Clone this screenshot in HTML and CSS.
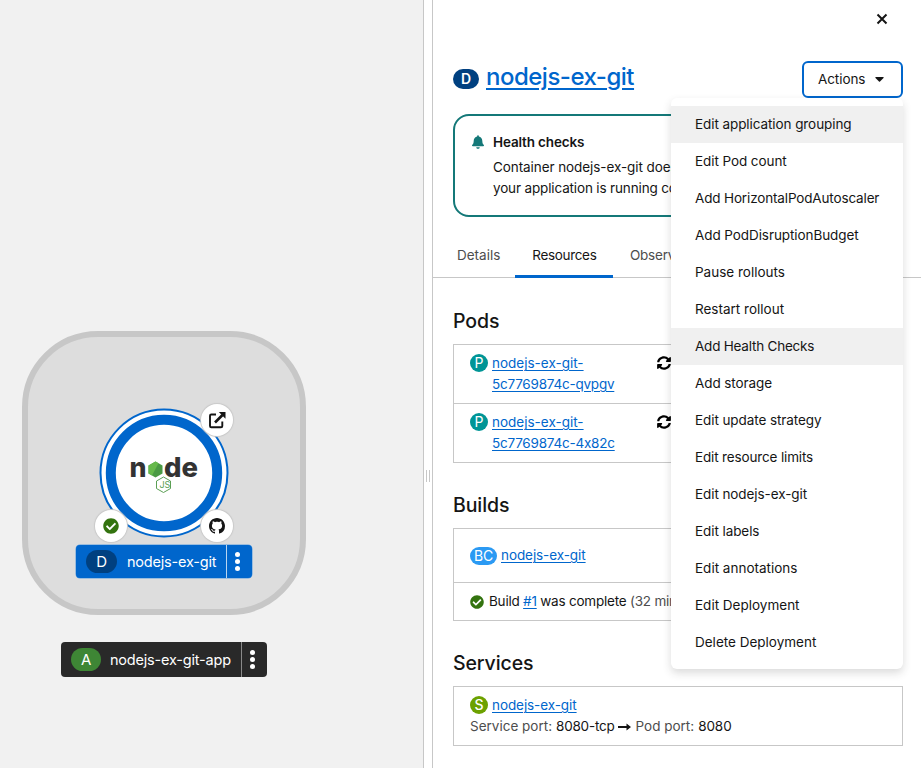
FILE: index.html
```
<!DOCTYPE html>
<html lang="en">
<head>
<meta charset="utf-8">
<title>Topology</title>
<link rel="stylesheet" href="styles.css">
</head>
<body>
<svg class="defs" aria-hidden="true">
  <symbol id="check" viewBox="0 0 512 512"><path d="M504 256c0 137-111 248-248 248S8 393 8 256 119 8 256 8s248 111 248 248zM227 387l184-184c6-6 6-16 0-23l-22-22c-7-7-17-7-23 0L216 308l-70-70c-6-7-16-7-23 0l-22 22c-6 7-6 17 0 23l104 104c6 6 16 6 22 0z"/></symbol>
  <symbol id="sync" viewBox="0 0 512 512"><path d="M371 134c-33-30-75-47-119-47-78 0-146 54-165 128-1 5-6 9-12 9H18c-7 0-13-7-12-14C28 93 132 8 256 8c68 0 130 27 175 71l36-36c15-15 41-4 41 17v134c0 13-11 24-24 24H350c-21 0-32-26-17-41zM32 296h134c21 0 32 26 17 41l-41 41c32 30 74 47 118 47 77 0 145-53 164-128 2-5 6-9 12-9h58c7 0 13 7 11 14-21 117-126 202-249 202-68 0-130-27-175-71l-36 36c-15 15-41 4-41-17V320c0-13 11-24 28-24z"/></symbol>
</svg>
<div class="app">
  <main class="canvas">
    <div class="group"></div>
    <div class="node">
      <svg width="130" height="130" viewBox="0 0 130 130">
        <circle cx="65" cy="65" r="63.5" fill="#fff" stroke="#06c" stroke-width="2"/>
        <circle cx="65" cy="65" r="53.2" fill="#fff" stroke="#06c" stroke-width="10"/>
        <g class="wordmark">
          <text x="30.500" y="68.500" textLength="17" lengthAdjust="spacingAndGlyphs">n</text>
          <text x="65" y="68.500" textLength="34" lengthAdjust="spacingAndGlyphs">de</text>
        </g>
        <path d="M56.500 53.500l7 4v8l-7 4-7-4v-8z" fill="#4a9a43"/>
        <path d="M49.500 57.500l7-4 3 1.700-6.500 12.300-3.500-2z" fill="#66b94b"/>
        <path d="M64.500 69l7 4v7.500l-7 4-7-4V73z" fill="#fff" stroke="#5b9f54"/>
        <text class="js" x="60.500" y="80">JS</text>
      </svg>
    </div>
    <div class="dot dot-open"><svg width="18" height="18" viewBox="0 0 18 18"><path d="M8 3.500H3.300Q2 3.500 2 4.800V15q0 1.300 1.300 1.300H13q1.300 0 1.300-1.300V10.500" fill="none" stroke="#151515" stroke-width="1.900"/><path d="M7 11.500L14.500 4" stroke="#151515" stroke-width="2.600"/><path d="M10.800 1H17.500v6.700z" fill="#151515"/></svg></div>
    <div class="dot dot-ok"><svg width="16" height="16" fill="#33730f"><use href="#check"/></svg></div>
    <div class="dot dot-git"><svg width="16" height="16" viewBox="0 0 16 16"><path fill="#151515" d="M8 0C3.580 0 0 3.580 0 8c0 3.540 2.290 6.530 5.470 7.590.4.070.55-.17.55-.38 0-.19-.010-.82-.010-1.490-2.010.37-2.530-.49-2.690-.94-.09-.23-.48-.94-.82-1.130-.28-.15-.68-.52-.010-.53.63-.010 1.080.58 1.230.82.72 1.210 1.870.87 2.330.66.070-.52.28-.87.51-1.070-1.780-.2-3.640-.89-3.640-3.950 0-.87.31-1.590.82-2.150-.08-.2-.36-1.020.08-2.120 0 0 .67-.21 2.200.82.64-.18 1.320-.27 2-.27s1.360.09 2 .27c1.530-1.040 2.200-.82 2.200-.82.44 1.100.16 1.920.08 2.120.51.56.82 1.270.82 2.150 0 3.070-1.870 3.750-3.650 3.950.29.25.54.73.54 1.480 0 1.070-.010 1.930-.010 2.200 0 .21.15.46.55.38A8.010 8.010 0 0 0 16 8c0-4.420-3.580-8-8-8z"/></svg></div>
    <div class="tag tag-blue"><span class="pill">D</span><span class="tag-name">nodejs-ex-git</span><span class="kebab"><i></i><i></i><i></i></span></div>
    <div class="tag tag-dark"><span class="pill">A</span><span class="tag-name">nodejs-ex-git-app</span><span class="kebab"><i></i><i></i><i></i></span></div>
  </main>
  <div class="splitter"><span class="grip"></span></div>
  <aside class="panel">
    <div class="close-row"><svg width="12" height="12" viewBox="0 0 12 12"><path d="M1.500 1.500l9 9M10.500 1.500l-9 9" stroke="#151515" stroke-width="2"/></svg></div>
    <header class="head">
      <span class="badge badge-d">D</span>
      <h1><a>nodejs-ex-git</a></h1>
      <div class="actions">
        <button class="toggle"><span>Actions</span><svg width="9" height="5" viewBox="0 0 9 5"><path d="M.8 0h7.400q.8.300.3.900L5 4.600q-.5.500-1 0L.5.900Q0 .300.8 0z" fill="#151515"/></svg></button>
        <ul class="menu">
          <li class="on">Edit application grouping</li>
          <li>Edit Pod count</li>
          <li class="long">Add HorizontalPodAutoscaler</li>
          <li>Add PodDisruptionBudget</li>
          <li class="loose">Pause rollouts</li>
          <li class="loose">Restart rollout</li>
          <li class="on tight">Add Health Checks</li>
          <li>Add storage</li>
          <li>Edit update strategy</li>
          <li class="long">Edit resource limits</li>
          <li>Edit nodejs-ex-git</li>
          <li>Edit labels</li>
          <li class="loose">Edit annotations</li>
          <li class="loose">Edit Deployment</li>
          <li class="loose">Delete Deployment</li>
        </ul>
      </div>
    </header>
    <section class="alert">
      <svg class="bell" width="13" height="14" viewBox="0 0 448 512" fill="#147878"><path d="M224 512c35 0 64-29 64-64H160c0 35 29 64 64 64zm215-150c-19-20-55-51-55-154 0-77-54-139-128-154V32a32 32 0 1 0-64 0v22C118 69 64 131 64 208c0 103-36 134-55 154-6 7-9 14-9 22 0 16 13 32 32 32h384c19 0 32-16 32-32 0-8-3-15-9-22z"/></svg>
      <div><h2>Health checks</h2><p>Container nodejs-ex-git does<br><span class="long">your application is running co</span></p></div>
    </section>
    <nav class="tabs"><a>Details</a><a class="current">Resources</a><a>Observ</a></nav>
    <div class="body">
      <h3>Pods</h3>
      <div class="list">
        <div class="row"><span class="badge badge-p">P</span><a class="pod">nodejs-ex-git-<br><span class="hash">5c7769874c-qvpgv</span></a><svg class="state" width="14" height="14"><use href="#sync"/></svg></div>
        <div class="row"><span class="badge badge-p">P</span><a class="pod">nodejs-ex-git-<br><span class="hash">5c7769874c-4x82c</span></a><svg class="state" width="14" height="14"><use href="#sync"/></svg></div>
      </div>
      <h3>Builds</h3>
      <div class="list">
        <div class="row row-build"><span class="badge badge-bc">BC</span><a>nodejs-ex-git</a></div>
        <div class="row row-status"><svg width="14" height="14" fill="#33730f"><use href="#check"/></svg><span class="tight">Build <a>#1</a> was complete <span class="muted">(32 min</span></span></div>
      </div>
      <h3>Services</h3>
      <div class="list">
        <div class="row row-service">
          <div class="line"><span class="badge badge-s">S</span><a>nodejs-ex-git</a></div>
          <div class="ports"><span class="muted">Service port:</span> <span class="tight">8080-tcp</span> <svg width="13" height="8" viewBox="0 0 13 8"><path d="M0 3h8.500V.5L13 4 8.500 7.500V5H0z" fill="#151515"/></svg> <span class="muted">Pod port:</span> 8080</div>
        </div>
      </div>
    </div>
  </aside>
</div>
</body>
</html>
```
FILE: styles.css
```
* { box-sizing: border-box; }
body { margin: 0; background: #fff; color: #151515; font: 13.5px/21px Inter, "Liberation Sans", sans-serif; font-feature-settings: "calt" 0; letter-spacing: -.08px; }
h1, h2, h3, p, ul { margin: 0; padding: 0; font-weight: 400; }
a { color: #06c; text-decoration: underline; text-underline-offset: 2px; text-decoration-thickness: 1px; }
svg { display: block; flex: none; }
.defs { position: absolute; width: 0; height: 0; }
.loose { letter-spacing: 0; }
.long { letter-spacing: -.15px; }
.tight { letter-spacing: -.22px; }
.app { display: flex; height: 768px; overflow: hidden; }

.canvas { position: relative; width: 423px; flex: none; background: #f1f1f1; }
.group { position: absolute; left: 22px; top: 331px; width: 284px; height: 284px; border: 6px solid #c7c7c7; border-radius: 76px; background: #ddd; }
.node { position: absolute; left: 99px; top: 408px; }
.wordmark { font: 800 27px Inter, sans-serif; letter-spacing: 0; fill: #333; }
.js { font: 9px Inter, sans-serif; fill: #5b9f54; }
.dot { position: absolute; display: flex; align-items: center; justify-content: center; width: 32px; height: 32px; border-radius: 50%; background: #fff; box-shadow: 0 0 1px 1px #c9c9c9; }
.dot-open { left: 201px; top: 404px; }
.dot-ok { left: 95px; top: 510px; }
.dot-git { left: 201px; top: 510px; }
.tag { position: absolute; display: flex; align-items: stretch; border-radius: 4px; color: #fff; font-size: 14.5px; letter-spacing: -.2px; }
.tag-blue { left: 76px; top: 545px; width: 176px; height: 33px; background: #06c; box-shadow: 0 0 0 .5px #5b9ee0; }
.tag-dark { left: 61px; top: 642px; width: 206px; height: 35px; background: #292929; }
.pill { align-self: center; margin-left: 10px; width: 30px; height: 23px; border-radius: 12px; line-height: 23px; text-align: center; font-size: 15px; }
.tag-blue .pill { width: 31px; background: #004080; }
.tag-dark .pill { background: #3e8635; }
.tag-name { flex: 1; align-self: center; margin-left: 10px; white-space: nowrap; }
.tag-dark .tag-name { margin-left: 9px; }
.kebab { display: flex; flex-direction: column; align-items: center; justify-content: center; gap: 2px; width: 26px; padding-right: 4px; border-left: 1px solid #b9d5f1; }
.tag-dark .kebab { border-color: #8a8a8a; }
.kebab i { width: 5px; height: 5px; border-radius: 50%; background: #fff; }

.splitter { display: flex; align-items: center; justify-content: center; width: 10px; flex: none; padding-top: 184px; border: solid #c7c7c7; border-width: 0 1px; }
.grip { width: 4px; height: 12px; border: solid #c7c7c7; border-width: 0 1px; }

.panel { flex: 1; min-width: 0; }
.close-row { display: flex; justify-content: flex-end; height: 61px; padding: 13px 33px 0 0; }
.head { display: flex; align-items: flex-start; height: 53px; padding: 0 18px 0 20px; }
.badge { flex: none; width: 18px; height: 18px; border-radius: 10px; color: #fff; text-align: center; font-size: 14px; line-height: 18px; }
.badge-d { width: 26px; height: 20px; margin: 8px 7px 0 0; background: #004080; font-weight: 600; line-height: 20px; }
.badge-p { background: #009596; }
.badge-bc { width: 27px; background: #2b9af3; }
.badge-s { background: #6ca100; font-weight: 500; }
h1 { font-size: 24px; line-height: 32px; font-weight: 500; letter-spacing: -.5px; }
h1 a { text-decoration-thickness: 2px; text-underline-offset: 3px; }
.actions { position: relative; margin-left: auto; }
.toggle { display: flex; align-items: center; gap: 10px; width: 101px; height: 37px; padding: 0 0 0 14px; border: 2px solid #06c; border-radius: 6px; background: #fff; color: #151515; font: inherit; letter-spacing: inherit; }
.menu { position: absolute; z-index: 2; right: 0; top: 37px; width: 232px; padding: 8px 0; list-style: none; border-radius: 6px; background: #fff; box-shadow: 0 4px 9px rgba(41,41,41,.17); white-space: nowrap; }
.menu li { height: 37px; padding: 8px 24px; }
.menu .on { background: #f0f0f0; }

.alert { display: flex; gap: 9px; height: 103px; margin: 0 18px 0 20px; padding: 15px 16px; border: 2px solid #147878; border-radius: 16px; overflow: hidden; white-space: nowrap; }
.bell { margin: 4px 0 0 1px; width: 12px; }
h2 { padding-top: 1px; margin-bottom: 4px; font-size: 13.5px; line-height: 21px; font-weight: 600; letter-spacing: -.15px; }
.tabs { display: flex; height: 61px; padding: 17px 0 0 7px; border-bottom: 1px solid #c7c7c7; }
.tabs a { height: 44px; padding: 11px 16.500px 0 17px; color: #4d4d4d; text-decoration: none; letter-spacing: 0; }
.tabs a:first-child { padding-right: 15px; }
.tabs .current { color: #151515; border-bottom: 3px solid #06c; letter-spacing: -.34px; }
.tabs a:last-child { letter-spacing: -.2px; }

.body { padding: 30px 18px 0 20px; }
h3 { margin-bottom: 10px; font-size: 19.5px; line-height: 26px; font-weight: 500; letter-spacing: -.1px; }
.list { margin-bottom: 29px; border: 1px solid #c7c7c7; }
.row { display: flex; gap: 4px; padding: 8px 16px; }
.row + .row { border-top: 1px solid #c7c7c7; }
.row > .badge-p { margin-top: 1px; }
.pod { width: 161px; letter-spacing: 0; }
.hash { letter-spacing: -.22px; }
.state { margin-top: 3px; }
.row-build { align-items: center; height: 53px; }
.row-status { align-items: center; gap: 5px; height: 38px; }
.row-service { display: block; }
.line { display: flex; align-items: center; gap: 4px; }
.line .badge { margin-top: -1px; }
.ports { display: flex; gap: 4px; align-items: center; }
.ports .muted { letter-spacing: 0; }
.muted { color: #4d4d4d; }
```
